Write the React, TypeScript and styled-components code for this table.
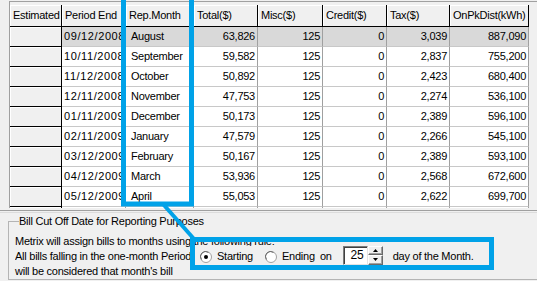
import React from "react";
import styled, { createGlobalStyle } from "styled-components";

const Global = createGlobalStyle`
  html, body { margin: 0; padding: 0; background: #f0f0f0; }
  body {
    font-family: "Liberation Sans", Arial, sans-serif;
    font-size: 11px;
    letter-spacing: -0.25px;
    color: #000;
  }
`;

const Window = styled.div`
  position: relative;
  width: 537px;
  height: 281px;
  overflow: hidden;
  background: #f0f0f0;
  display: flex;
  flex-direction: column;
`;

const GridFrame = styled.div`
  box-sizing: border-box;
  margin: 1px 0 0 9px;
  height: 207px;
  padding-top: 3px;
  border-top: 1px solid #a0a0a0;
  border-left: 1px solid #a0a0a0;
  overflow: hidden;
  flex-shrink: 0;
`;

const Row = styled.div`
  display: grid;
  grid-template-columns: 52px 64px 68px 64px 65px 64px 63px 79px;
  width: 519px;
`;

const HeadCell = styled.div`
  box-sizing: border-box;
  height: 22px;
  line-height: 21px;
  padding-left: 3px;
  background: #f0f0f0;
  border-right: 1px solid #000;
  border-bottom: 1px solid #000;
  box-shadow: inset 1px 1px 0 #fff;
  white-space: nowrap;
  overflow: hidden;
`;

const FixedCell = styled.div`
  box-sizing: border-box;
  height: 20px;
  background: #f0f0f0;
  border-right: 1px solid #000;
  border-bottom: 1px solid #000;
  box-shadow: inset 1px 1px 0 #fff;
`;

const DataCell = styled.div<{ $align: "left" | "right"; $pad: number; $sel: boolean; $spacing: number }>`
  box-sizing: border-box;
  height: 20px;
  line-height: 19px;
  background: ${(p) => (p.$sel ? "#d9d9d9" : "#fff")};
  border-right: 1px solid #a0a0a0;
  border-bottom: 1px solid #c8c8c8;
  text-align: ${(p) => p.$align};
  padding: ${(p) => (p.$align === "left" ? `0 0 0 ${p.$pad}px` : `0 ${p.$pad}px 0 0`)};
  letter-spacing: ${(p) => p.$spacing}px;
  white-space: nowrap;
  overflow: hidden;
`;

const Splitter = styled.div`
  box-sizing: border-box;
  margin-top: 2px;
  height: 3px;
  border-top: 1px solid #a0a0a0;
  border-bottom: 1px solid #dcdcdc;
  flex-shrink: 0;
`;

const GroupBox = styled.fieldset`
  margin: 1px -4px 0 8px;
  padding: 6px 0 0 6px;
  border: 1px solid #b4b4b4;
  min-width: 0;
`;

const Legend = styled.legend`
  margin-left: 4px;
  padding: 0 2px 0 0;
  width: 560px;
  line-height: 14px;
  font-size: 11px;
`;

const TextLine = styled.div`
  height: 15px;
  line-height: 15px;
  white-space: nowrap;
`;

const OptionLine = styled.div`
  display: flex;
  align-items: center;
  height: 15px;
  line-height: 15px;
  white-space: nowrap;
`;

const ClippedText = styled.div`
  width: 181px;
  flex-shrink: 0;
  overflow: hidden;
`;

const RadioPanel = styled.div`
  display: flex;
  align-items: center;
  padding-left: 4px;
  background: #f0f0f0;
`;

const Option = styled.label<{ $w: number }>`
  display: flex;
  align-items: center;
  width: ${(p) => p.$w}px;
  flex-shrink: 0;
`;

const OptionText = styled.span`
  margin-left: 5px;
`;

const Word = styled.span<{ $ml: number }>`
  margin-left: ${(p) => p.$ml}px;
  flex-shrink: 0;
`;

const Spin = styled.div`
  display: flex;
  margin-left: 11px;
  margin-bottom: 3px;
  flex-shrink: 0;
`;

const SpinEdit = styled.div`
  box-sizing: border-box;
  width: 25px;
  height: 19px;
  background: #fff;
  border-style: solid;
  border-width: 1px;
  border-color: #7a7a7a #e3e3e3 #e3e3e3 #7a7a7a;
  box-shadow: inset 1px 1px 0 #404040;
  text-align: right;
  padding-right: 3px;
  font-size: 12px;
  letter-spacing: 0;
  line-height: 17px;
`;

const SpinButtons = styled.div`
  display: flex;
  flex-direction: column;
  width: 15px;
  height: 19px;
`;

const SpinButton = styled.div`
  box-sizing: border-box;
  flex: 1;
  display: flex;
  align-items: center;
  justify-content: center;
  background: #f0f0f0;
  border-style: solid;
  border-width: 1px;
  border-color: #fff #696969 #696969 #fff;
  box-shadow: inset -1px -1px 0 #a0a0a0;
`;

const Overlay = styled.svg`
  position: absolute;
  left: 0;
  top: 0;
  pointer-events: none;
`;

const RadioMark = ({ checked }: { checked: boolean }) => (
  <svg width="12" height="12" viewBox="0 0 12 12">
    <circle cx="6" cy="6" r="5.5" fill="#fff" stroke="#a0a0a0" />
    <path d="M1.5 8.5 A5 5 0 0 1 8.5 1.5" fill="none" stroke="#696969" strokeWidth="1" />
    {checked && <circle cx="6" cy="6" r="2" fill="#000" />}
  </svg>
);

const Arrow = ({ up }: { up: boolean }) => (
  <svg width="5" height="3" viewBox="0 0 5 3">
    <path d={up ? "M2.5 0 L5 3 L0 3 Z" : "M0 0 L5 0 L2.5 3 Z"} fill="#000" />
  </svg>
);

const headers = ["Estimated", "Period End", "Rep.Month", "Total($)", "Misc($)", "Credit($)", "Tax($)", "OnPkDist(kWh)"];

const rows: string[][] = [
  ["09/12/2008", "August", "63,826", "125", "0", "3,039", "887,090"],
  ["10/11/2008", "September", "59,582", "125", "0", "2,837", "755,200"],
  ["11/12/2008", "October", "50,892", "125", "0", "2,423", "680,400"],
  ["12/11/2008", "November", "47,753", "125", "0", "2,274", "536,100"],
  ["01/11/2009", "December", "50,173", "125", "0", "2,389", "596,100"],
  ["02/11/2009", "January", "47,579", "125", "0", "2,266", "545,100"],
  ["03/12/2009", "February", "50,167", "125", "0", "2,389", "593,100"],
  ["04/12/2009", "March", "53,936", "125", "0", "2,568", "672,600"],
  ["05/12/2009", "April", "55,053", "125", "0", "2,622", "699,700"],
  ["", "", "", "", "", "", ""],
];

export default function App() {
  return (
    <Window>
      <Global />
      <GridFrame>
        <Row>
          {headers.map((h) => (
            <HeadCell key={h}>{h}</HeadCell>
          ))}
        </Row>
        {rows.map((r, i) => (
          <Row key={i}>
            <FixedCell />
            {r.map((v, j) => (
              <DataCell
                key={j}
                $sel={i === 0}
                $align={j < 2 ? "left" : "right"}
                $pad={j === 0 ? 2 : j === 1 ? 5 : 2}
                $spacing={j === 0 ? 0.6 : -0.25}
              >
                {v}
              </DataCell>
            ))}
          </Row>
        ))}
      </GridFrame>
      <Splitter />
      <GroupBox>
        <Legend>Bill Cut Off Date for Reporting Purposes</Legend>
        <TextLine>Metrix will assign bills to months using the following rule:</TextLine>
        <OptionLine>
          <ClippedText>All bills falling in the one-month Period</ClippedText>
          <RadioPanel>
            <Option $w={65}>
              <RadioMark checked />
              <OptionText>Starting</OptionText>
            </Option>
            <Option $w={51}>
              <RadioMark checked={false} />
              <OptionText>Ending</OptionText>
            </Option>
            <Word $ml={4}>on</Word>
            <Spin>
              <SpinEdit>25</SpinEdit>
              <SpinButtons>
                <SpinButton>
                  <Arrow up />
                </SpinButton>
                <SpinButton>
                  <Arrow up={false} />
                </SpinButton>
              </SpinButtons>
            </Spin>
            <Word $ml={10}>day of the Month.</Word>
          </RadioPanel>
        </OptionLine>
        <TextLine>will be considered that month's bill</TextLine>
      </GroupBox>
      <Overlay width="537" height="281" viewBox="0 0 537 281">
        <rect x="123.5" y="-10" width="68" height="214" fill="none" stroke="#00a2e8" strokeWidth="5" />
        <line x1="163" y1="204" x2="194" y2="239" stroke="#00a2e8" strokeWidth="4" />
        <rect x="192.5" y="239.5" width="299" height="28" fill="none" stroke="#00a2e8" strokeWidth="5" />
      </Overlay>
    </Window>
  );
}
